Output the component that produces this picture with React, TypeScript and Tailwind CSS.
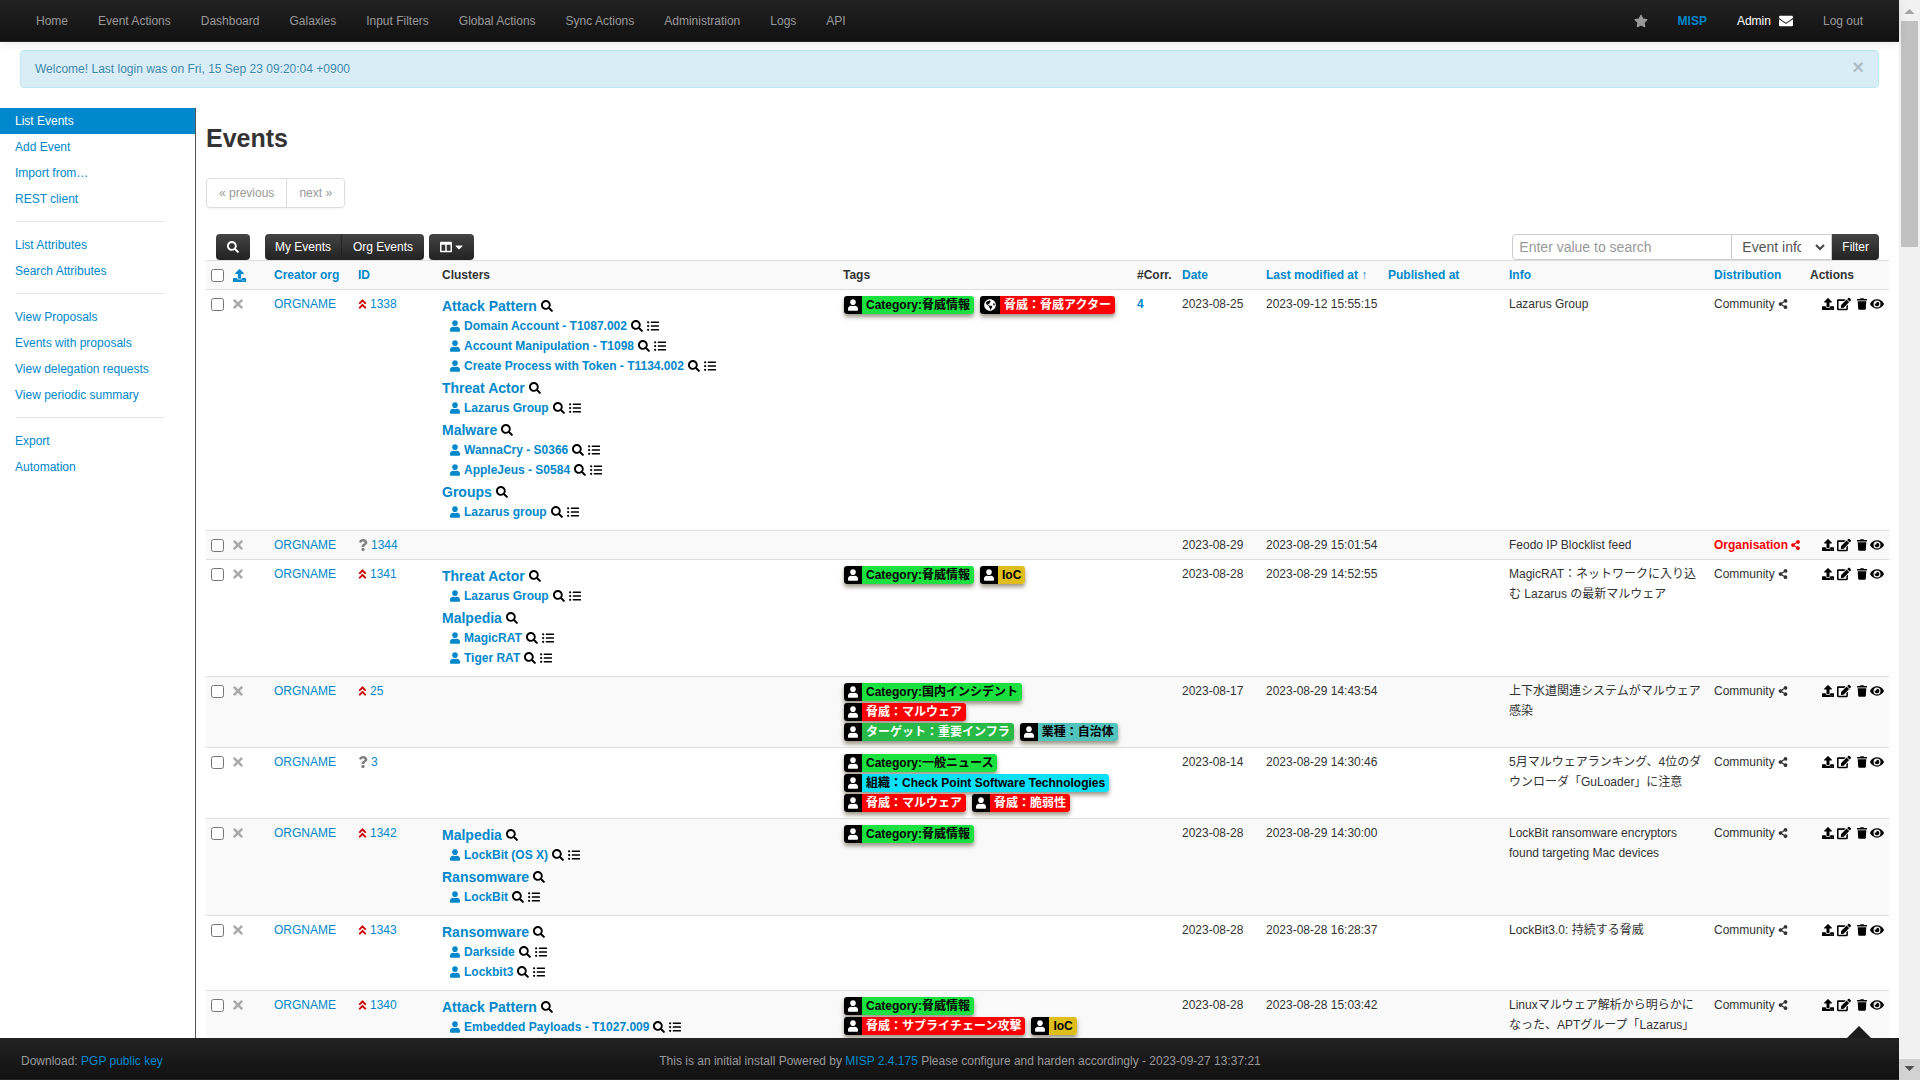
import React from 'react';
import {
  FaAngleDoubleUp, FaCaretDown, FaColumns, FaEdit, FaEnvelope, FaEye, FaGlobeAmericas, FaListUl,
  FaQuestion, FaSearch, FaShareAlt, FaStar, FaTimes, FaTrash, FaUpload, FaUser,
} from 'react-icons/fa';

interface Tag {
  name: string;
  color: string;
  global?: boolean;
}

interface Galaxy {
  name: string;
  clusters: string[];
}

interface MispEvent {
  id: number;
  high: boolean;
  galaxies: Galaxy[];
  tags: Tag[];
  corr?: number;
  date: string;
  modified: string;
  info: string;
  orgOnly?: boolean;
}

const GREEN = 'bg-[#1ae040] text-black';
const RED = 'bg-[#ff0000] text-white';
const YELLOW = 'bg-[#dfbd1a] text-black';

const threatInfo: Tag = { name: 'Category:脅威情報', color: GREEN };
const malware: Tag = { name: '脅威：マルウェア', color: RED };
const ioc: Tag = { name: 'IoC', color: YELLOW };

const events: MispEvent[] = [
  {
    id: 1338,
    high: true,
    galaxies: [
      {
        name: 'Attack Pattern',
        clusters: ['Domain Account - T1087.002', 'Account Manipulation - T1098', 'Create Process with Token - T1134.002'],
      },
      { name: 'Threat Actor', clusters: ['Lazarus Group'] },
      { name: 'Malware', clusters: ['WannaCry - S0366', 'AppleJeus - S0584'] },
      { name: 'Groups', clusters: ['Lazarus group'] },
    ],
    tags: [threatInfo, { name: '脅威：脅威アクター', color: RED, global: true }],
    corr: 4,
    date: '2023-08-25',
    modified: '2023-09-12 15:55:15',
    info: 'Lazarus Group',
  },
  {
    id: 1344,
    high: false,
    galaxies: [],
    tags: [],
    date: '2023-08-29',
    modified: '2023-08-29 15:01:54',
    info: 'Feodo IP Blocklist feed',
    orgOnly: true,
  },
  {
    id: 1341,
    high: true,
    galaxies: [
      { name: 'Threat Actor', clusters: ['Lazarus Group'] },
      { name: 'Malpedia', clusters: ['MagicRAT', 'Tiger RAT'] },
    ],
    tags: [threatInfo, ioc],
    date: '2023-08-28',
    modified: '2023-08-29 14:52:55',
    info: 'MagicRAT：ネットワークに入り込む Lazarus の最新マルウェア',
  },
  {
    id: 25,
    high: true,
    galaxies: [],
    tags: [
      { name: 'Category:国内インシデント', color: GREEN },
      malware,
      { name: 'ターゲット：重要インフラ', color: 'bg-[#28b946] text-white' },
      { name: '業種：自治体', color: 'bg-[#52c4bd] text-black' },
    ],
    date: '2023-08-17',
    modified: '2023-08-29 14:43:54',
    info: '上下水道関連システムがマルウェア感染',
  },
  {
    id: 3,
    high: false,
    galaxies: [],
    tags: [
      { name: 'Category:一般ニュース', color: GREEN },
      { name: '組織：Check Point Software Technologies', color: 'bg-[#0be0fb] text-black' },
      malware,
      { name: '脅威：脆弱性', color: RED },
    ],
    date: '2023-08-14',
    modified: '2023-08-29 14:30:46',
    info: '5月マルウェアランキング、4位のダウンローダ「GuLoader」に注意',
  },
  {
    id: 1342,
    high: true,
    galaxies: [
      { name: 'Malpedia', clusters: ['LockBit (OS X)'] },
      { name: 'Ransomware', clusters: ['LockBit'] },
    ],
    tags: [threatInfo],
    date: '2023-08-28',
    modified: '2023-08-29 14:30:00',
    info: 'LockBit ransomware encryptors found targeting Mac devices',
  },
  {
    id: 1343,
    high: true,
    galaxies: [{ name: 'Ransomware', clusters: ['Darkside', 'Lockbit3'] }],
    tags: [],
    date: '2023-08-28',
    modified: '2023-08-28 16:28:37',
    info: 'LockBit3.0: 持続する脅威',
  },
  {
    id: 1340,
    high: true,
    galaxies: [{ name: 'Attack Pattern', clusters: ['Embedded Payloads - T1027.009'] }],
    tags: [threatInfo, { name: '脅威：サプライチェーン攻撃', color: RED }, ioc],
    date: '2023-08-28',
    modified: '2023-08-28 15:03:42',
    info: 'Linuxマルウェア解析から明らかになった、APTグループ「Lazarus」',
  },
];

const navItems = [
  'Home', 'Event Actions', 'Dashboard', 'Galaxies', 'Input Filters',
  'Global Actions', 'Sync Actions', 'Administration', 'Logs', 'API',
];

const menuGroups = [
  ['List Events', 'Add Event', 'Import from…', 'REST client'],
  ['List Attributes', 'Search Attributes'],
  ['View Proposals', 'Events with proposals', 'View delegation requests', 'View periodic summary'],
  ['Export', 'Automation'],
];

const darkBtn = 'flex h-[26px] items-center bg-linear-to-b from-[#444] to-[#222] text-white';

const TopNav = () => (
  <nav className="z-10 flex h-[42px] shrink-0 items-center justify-between border-b border-[#252525] bg-linear-to-b from-[#222] to-[#111] px-[21px] text-[#999] shadow-[0_1px_10px_rgba(0,0,0,0.1)]">
    <ul className="flex">
      {navItems.map((item) => (
        <li key={item}>
          <a href="#" className="px-[15px]">{item}</a>
        </li>
      ))}
    </ul>
    <ul className="flex items-center">
      <li><a href="#" aria-label="Bookmark" className="block px-[15px]"><FaStar size={14} /></a></li>
      <li><a href="#" className="px-[15px] font-bold text-[#0088cc]">MISP</a></li>
      <li>
        <a href="#" className="flex items-center gap-2 px-[15px] text-white">
          Admin <FaEnvelope size={14} />
        </a>
      </li>
      <li><a href="#" className="px-[15px]">Log out</a></li>
    </ul>
  </nav>
);

const SideMenu = () => (
  <aside className="w-[196px] shrink-0 border-r border-[#555]">
    {menuGroups.map((group, g) => (
      <React.Fragment key={g}>
        {g > 0 && <hr className="mt-[9px] mr-[31px] mb-[10px] ml-4 border-[#e5e5e5]" />}
        <ul>
          {group.map((item) => (
            <li key={item}>
              <a
                href="#"
                className={`block px-[15px] py-[3px] ${item === 'List Events' ? 'bg-[#0088cc] text-white' : 'text-[#0088cc]'}`}
              >
                {item}
              </a>
            </li>
          ))}
        </ul>
      </React.Fragment>
    ))}
  </aside>
);

const TagLabel = ({ tag }: { tag: Tag }) => (
  <span className="flex h-[18px] overflow-hidden rounded-[3px] font-bold leading-[18px] whitespace-nowrap shadow-[0_3px_4px_rgba(60,50,20,0.5)]">
    <span className="flex items-center bg-black px-1 text-white">
      {tag.global ? <FaGlobeAmericas size={12} /> : <FaUser size={12} className="w-[10px]" />}
    </span>
    <a href="#" className={`px-1 ${tag.color}`}>{tag.name}</a>
  </span>
);

const GalaxyList = ({ galaxies }: { galaxies: Galaxy[] }) => (
  <div className={galaxies.length ? 'pb-1 font-bold text-[#0088cc]' : ''}>
    {galaxies.map((galaxy) => (
      <div key={galaxy.name}>
        <div className="flex h-[22px] items-center gap-1 pt-[2px] text-sm">
          <a href="#">{galaxy.name}</a>
          <FaSearch size={12} className="text-black" />
        </div>
        {galaxy.clusters.map((cluster) => (
          <div key={cluster} className="flex h-5 items-center gap-1 pl-2">
            <FaUser size={12} className="w-[10px]" />
            <a href="#">{cluster}</a>
            <FaSearch size={12} className="text-black" />
            <FaListUl size={12} className="text-black" />
          </div>
        ))}
      </div>
    ))}
  </div>
);

const EventRow = ({ event, striped }: { event: MispEvent; striped: boolean }) => (
  <tr className={`border-t border-[#ddd] align-top ${striped ? 'bg-[#f9f9f9]' : ''}`}>
    <td className="px-[5px] py-1">
      <input type="checkbox" aria-label={`Select event ${event.id}`} className="mt-1 block size-[13px]" />
    </td>
    <td className="px-[5px] py-1 text-[#aaa]">
      <span className="flex h-5 items-center"><FaTimes size={14} className="w-[10px]" /></span>
    </td>
    <td className="px-[5px] py-1"><a href="#" className="text-[#0088cc]">ORGNAME</a></td>
    <td className="px-[5px] py-1">
      <a href="#" className="flex items-center gap-[3px] text-[#0088cc]">
        {event.high
          ? <FaAngleDoubleUp size={12} className="w-[9px] text-[#cc0000]" />
          : <FaQuestion size={12} className="w-[10px] text-[#808080]" />}
        {event.id}
      </a>
    </td>
    <td className="px-[5px] py-1"><GalaxyList galaxies={event.galaxies} /></td>
    <td className="px-[5px] py-1">
      <div className={`flex flex-wrap gap-x-[6px] gap-y-[2px] pl-px ${event.tags.length ? 'py-[2px]' : ''}`}>
        {event.tags.map((tag) => <TagLabel key={tag.name} tag={tag} />)}
      </div>
    </td>
    <td className="px-[5px] py-1"><a href="#" className="font-bold text-[#0088cc]">{event.corr}</a></td>
    <td className="px-[5px] py-1">{event.date}</td>
    <td className="px-[5px] py-1">{event.modified}</td>
    <td className="px-[5px] py-1" />
    <td className="px-[5px] py-1">{event.info}</td>
    <td className="px-[5px] py-1">
      <span className={`flex items-center gap-[3px] ${event.orgOnly ? 'font-bold text-[#ff0000]' : ''}`}>
        {event.orgOnly ? 'Organisation' : 'Community'}
        <FaShareAlt size={10} />
      </span>
    </td>
    <td className="px-[5px] py-1 text-black">
      <div className="flex h-5 items-center justify-end gap-[3px]">
        <a href="#" aria-label="Publish"><FaUpload size={12} /></a>
        <a href="#" aria-label="Edit" className="mr-[3px]"><FaEdit size={14} /></a>
        <a href="#" aria-label="Delete"><FaTrash size={12} className="w-[10px]" /></a>
        <a href="#" aria-label="View"><FaEye size={14} /></a>
      </div>
    </td>
  </tr>
);

const Toolbar = () => (
  <div className="flex justify-between px-[10px]">
    <div className="flex">
      <button aria-label="Search" className={`${darkBtn} mr-[15px] rounded px-[11px]`}><FaSearch size={12} /></button>
      <button className={`${darkBtn} rounded-l border-r border-[#222] px-[10px]`}>My Events</button>
      <button className={`${darkBtn} mr-[5px] rounded-r px-[11px]`}>Org Events</button>
      <button aria-label="Columns" className={`${darkBtn} gap-[3px] rounded px-[11px]`}>
        <FaColumns size={12} /><FaCaretDown size={12} className="w-2" />
      </button>
    </div>
    <form className="flex text-sm text-[#555]">
      <input
        type="text"
        aria-label="Search value"
        placeholder="Enter value to search"
        className="h-[26px] w-[220px] rounded-l border border-[#ccc] px-[6px] placeholder:text-[#999]"
      />
      <div className="relative">
        <select aria-label="Search field" className="h-[26px] w-[100px] appearance-none border-y border-r border-[#ccc] pr-[30px] pl-[10px]">
          <option>Event info</option>
        </select>
        <svg viewBox="0 0 10 7" className="pointer-events-none absolute top-[10px] right-[7px] w-[10px]" fill="none" stroke="#444" strokeWidth="2">
          <path d="M1 1l4 4 4-4" />
        </svg>
      </div>
      <button type="button" className={`${darkBtn} rounded-r px-[10px] text-xs`}>Filter</button>
    </form>
  </div>
);

const EventTable = () => (
  <table className="w-full table-fixed border-collapse">
    <colgroup>
      <col className="w-[22px]" />
      <col className="w-[41px]" />
      <col className="w-[84px]" />
      <col className="w-[84px]" />
      <col />
      <col className="w-[294px]" />
      <col className="w-[45px]" />
      <col className="w-[84px]" />
      <col className="w-[122px]" />
      <col className="w-[121px]" />
      <col className="w-[205px]" />
      <col className="w-[96px]" />
      <col className="w-[84px]" />
    </colgroup>
    <thead>
      <tr className="border-t border-[#ddd] bg-[#f9f9f9] text-left align-top whitespace-nowrap">
        <th className="px-[5px] py-1"><input type="checkbox" aria-label="Select all" className="mt-1 block size-[13px]" /></th>
        <th className="px-[5px] py-1 text-[#0088cc]">
          <a href="#" aria-label="Published" className="flex h-5 items-center"><FaUpload size={13} /></a>
        </th>
        <th className="px-[5px] py-1 text-[#0088cc]"><a href="#">Creator org</a></th>
        <th className="px-[5px] py-1 text-[#0088cc]"><a href="#">ID</a></th>
        <th className="px-[5px] py-1">Clusters</th>
        <th className="px-[5px] py-1">Tags</th>
        <th className="px-[5px] py-1">#Corr.</th>
        <th className="px-[5px] py-1 text-[#0088cc]"><a href="#">Date</a></th>
        <th className="px-[5px] py-1 text-[#0088cc]"><a href="#">Last modified at ↑</a></th>
        <th className="px-[5px] py-1 text-[#0088cc]"><a href="#">Published at</a></th>
        <th className="px-[5px] py-1 text-[#0088cc]"><a href="#">Info</a></th>
        <th className="px-[5px] py-1 text-[#0088cc]"><a href="#">Distribution</a></th>
        <th className="px-[5px] py-1">Actions</th>
      </tr>
    </thead>
    <tbody>
      {events.map((event, i) => <EventRow key={event.id} event={event} striped={i % 2 === 1} />)}
    </tbody>
  </table>
);

const Footer = () => (
  <footer className="relative z-10 grid h-[42px] shrink-0 grid-cols-[1fr_auto_1fr] items-center border-b border-[#252525] bg-linear-to-b from-[#222] to-[#111] pt-1 pl-[21px] text-[#999]">
    <span>Download: <a href="#" className="text-[#0088cc]">PGP public key</a></span>
    <span>
      This is an initial install Powered by <a href="#" className="text-[#0088cc]">MISP 2.4.175</a> Please configure and harden accordingly - 2023-09-27 13:37:21
    </span>
    <svg viewBox="0 0 24 12" className="absolute -top-3 right-7 w-6" fill="#1b1b1b"><path d="M12 0l12 12H0z" /></svg>
  </footer>
);

const ScrollBar = () => (
  <div className="flex w-[21px] shrink-0 flex-col items-center justify-between bg-[#f1f1f1]">
    <div className="flex w-full flex-col items-center">
      <svg viewBox="0 0 21 21" className="w-[21px]" fill="#a3a3a3"><path d="M10.500 9l5 5h-10z" /></svg>
      <div className="h-[226px] w-[17px] bg-[#c1c1c1]" />
    </div>
    <svg viewBox="0 0 21 21" className="w-[21px] bg-[#d2d2d2]" fill="#505050"><path d="M5.500 7h10l-5 5z" /></svg>
  </div>
);

const App: React.FC = () => (
  <div className="flex h-screen overflow-hidden bg-white font-['Liberation_Sans','Noto_Sans_CJK_JP',sans-serif] text-xs leading-5 text-[#333]">
    <div className="flex min-w-0 flex-1 flex-col">
      <TopNav />
      <div className="flex min-h-0 flex-1 flex-col overflow-hidden">
        <div className="mx-5 mt-2 mb-5 flex items-start justify-between rounded border border-[#bce8f1] bg-[#d9edf7] px-[14px] py-2 text-[#3a87ad] [text-shadow:0_1px_0_rgba(255,255,255,0.5)]">
          Welcome! Last login was on Fri, 15 Sep 23 09:20:04 +0900
          <button aria-label="Close" className="text-xl leading-4 font-bold text-black opacity-20">×</button>
        </div>
        <div className="flex min-h-0 flex-1">
          <SideMenu />
          <main className="min-w-0 flex-1 px-[10px]">
            <h2 className="mt-[10px] mb-5 text-[25px] leading-10 font-bold">Events</h2>
            <div className="mb-[26px] inline-flex rounded border border-[#ddd] text-[#999] shadow-[0_1px_2px_rgba(0,0,0,0.05)]">
              <a href="#" className="border-r border-[#ddd] px-3 py-1">« previous</a>
              <a href="#" className="px-3 py-1">next »</a>
            </div>
            <Toolbar />
            <EventTable />
          </main>
        </div>
      </div>
      <Footer />
    </div>
    <ScrollBar />
  </div>
);

export default App;
